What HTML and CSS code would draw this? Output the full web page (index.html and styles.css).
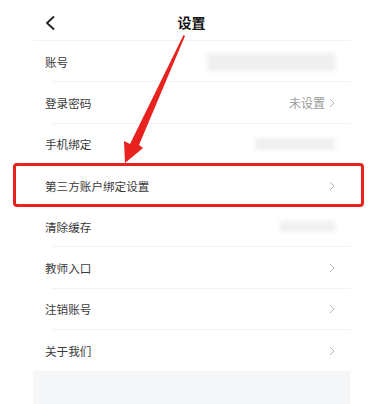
FILE: index.html
```html
<!DOCTYPE html>
<html lang="zh">
<head>
<meta charset="utf-8">
<link rel="stylesheet" href="styles.css">
</head>
<body>
<div class="page">
  <div class="panel">
    <div class="header">
      <svg class="back" width="10" height="14" viewBox="0 0 10 14"><path d="M8.5 1 L2 7 L8.5 13" fill="none" stroke="#222" stroke-width="1.8" stroke-linecap="round" stroke-linejoin="round"/></svg>
      <div class="title">设置</div>
    </div>
    <div class="row"><span class="label">账号</span><span class="blur blur-account"></span></div>
    <div class="row"><span class="label">登录密码</span><span class="value">未设置</span><svg class="chev" width="6" height="10" viewBox="0 0 6 10"><path d="M1 1 L5 5 L1 9" fill="none" stroke="#b8b8b8" stroke-width="1"/></svg></div>
    <div class="row"><span class="label">手机绑定</span><span class="blur blur-phone"></span></div>
    <div class="row"><span class="label">第三方账户绑定设置</span><svg class="chev" width="6" height="10" viewBox="0 0 6 10"><path d="M1 1 L5 5 L1 9" fill="none" stroke="#b8b8b8" stroke-width="1"/></svg></div>
    <div class="row"><span class="label">清除缓存</span><span class="blur blur-cache"></span></div>
    <div class="row"><span class="label">教师入口</span><svg class="chev" width="6" height="10" viewBox="0 0 6 10"><path d="M1 1 L5 5 L1 9" fill="none" stroke="#b8b8b8" stroke-width="1"/></svg></div>
    <div class="row"><span class="label">注销账号</span><svg class="chev" width="6" height="10" viewBox="0 0 6 10"><path d="M1 1 L5 5 L1 9" fill="none" stroke="#b8b8b8" stroke-width="1"/></svg></div>
    <div class="row last"><span class="label">关于我们</span><svg class="chev" width="6" height="10" viewBox="0 0 6 10"><path d="M1 1 L5 5 L1 9" fill="none" stroke="#b8b8b8" stroke-width="1"/></svg></div>
    <div class="footer"></div>
  </div>
  <div class="highlight"></div>
  <svg class="arrow" width="378" height="404" viewBox="0 0 378 404">
    <polygon points="183.5,35 185,36 139,145 143,148 125,163 124,141 130,144" fill="#e8221e"/>
  </svg>
</div>
</body>
</html>
```

FILE: styles.css
```css
html, body {
  margin: 0;
  padding: 0;
  background: #ffffff;
}
body {
  font-family: "Noto Sans CJK SC", "Noto Sans", sans-serif;
  color: #333333;
  width: 378px;
  height: 404px;
  overflow: hidden;
}
.page {
  position: relative;
  width: 378px;
  height: 404px;
}
.panel {
  margin-left: 33px;
  width: 317px;
  display: flex;
  flex-direction: column;
}
.header {
  height: 40px;
  border-bottom: 1px solid #f3f3f3;
  display: flex;
  align-items: center;
  justify-content: center;
  position: relative;
}
.back {
  position: absolute;
  left: 12px;
  top: 16px;
}
.title {
  font-size: 14px;
  font-weight: 700;
  color: #111;
  margin-top: 4px;
}
.row {
  height: 41.3px;
  box-sizing: border-box;
  display: flex;
  align-items: center;
  padding: 0 15px 0 12px;
  font-size: 11.6px;
  position: relative;
}
.row::after {
  content: "";
  position: absolute;
  left: 19px;
  right: 0;
  bottom: 0;
  height: 1px;
  background: #f3f3f3;
}
.row.last::after {
  display: none;
}
.label {
  flex: 1;
  color: #3a3a3a;
}
.value {
  color: #9a9a9a;
  font-size: 12px;
  margin-right: 4px;
}
.chev {
  display: block;
}
.blur {
  background: #ececec;
  filter: blur(2px);
  border-radius: 3px;
}
.blur-account {
  width: 128px;
  height: 18px;
  opacity: 0.8;
}
.blur-phone {
  width: 80px;
  height: 12px;
  opacity: 0.8;
}
.blur-cache {
  width: 55px;
  height: 11px;
  opacity: 0.8;
}
.footer {
  height: 34px;
  background: #f5f6f7;
}
.highlight {
  position: absolute;
  left: 13px;
  top: 163px;
  width: 351px;
  height: 44px;
  box-sizing: border-box;
  border: 3px solid #e8221e;
  border-radius: 4px;
}
.arrow {
  position: absolute;
  left: 0;
  top: 0;
  pointer-events: none;
}
```
